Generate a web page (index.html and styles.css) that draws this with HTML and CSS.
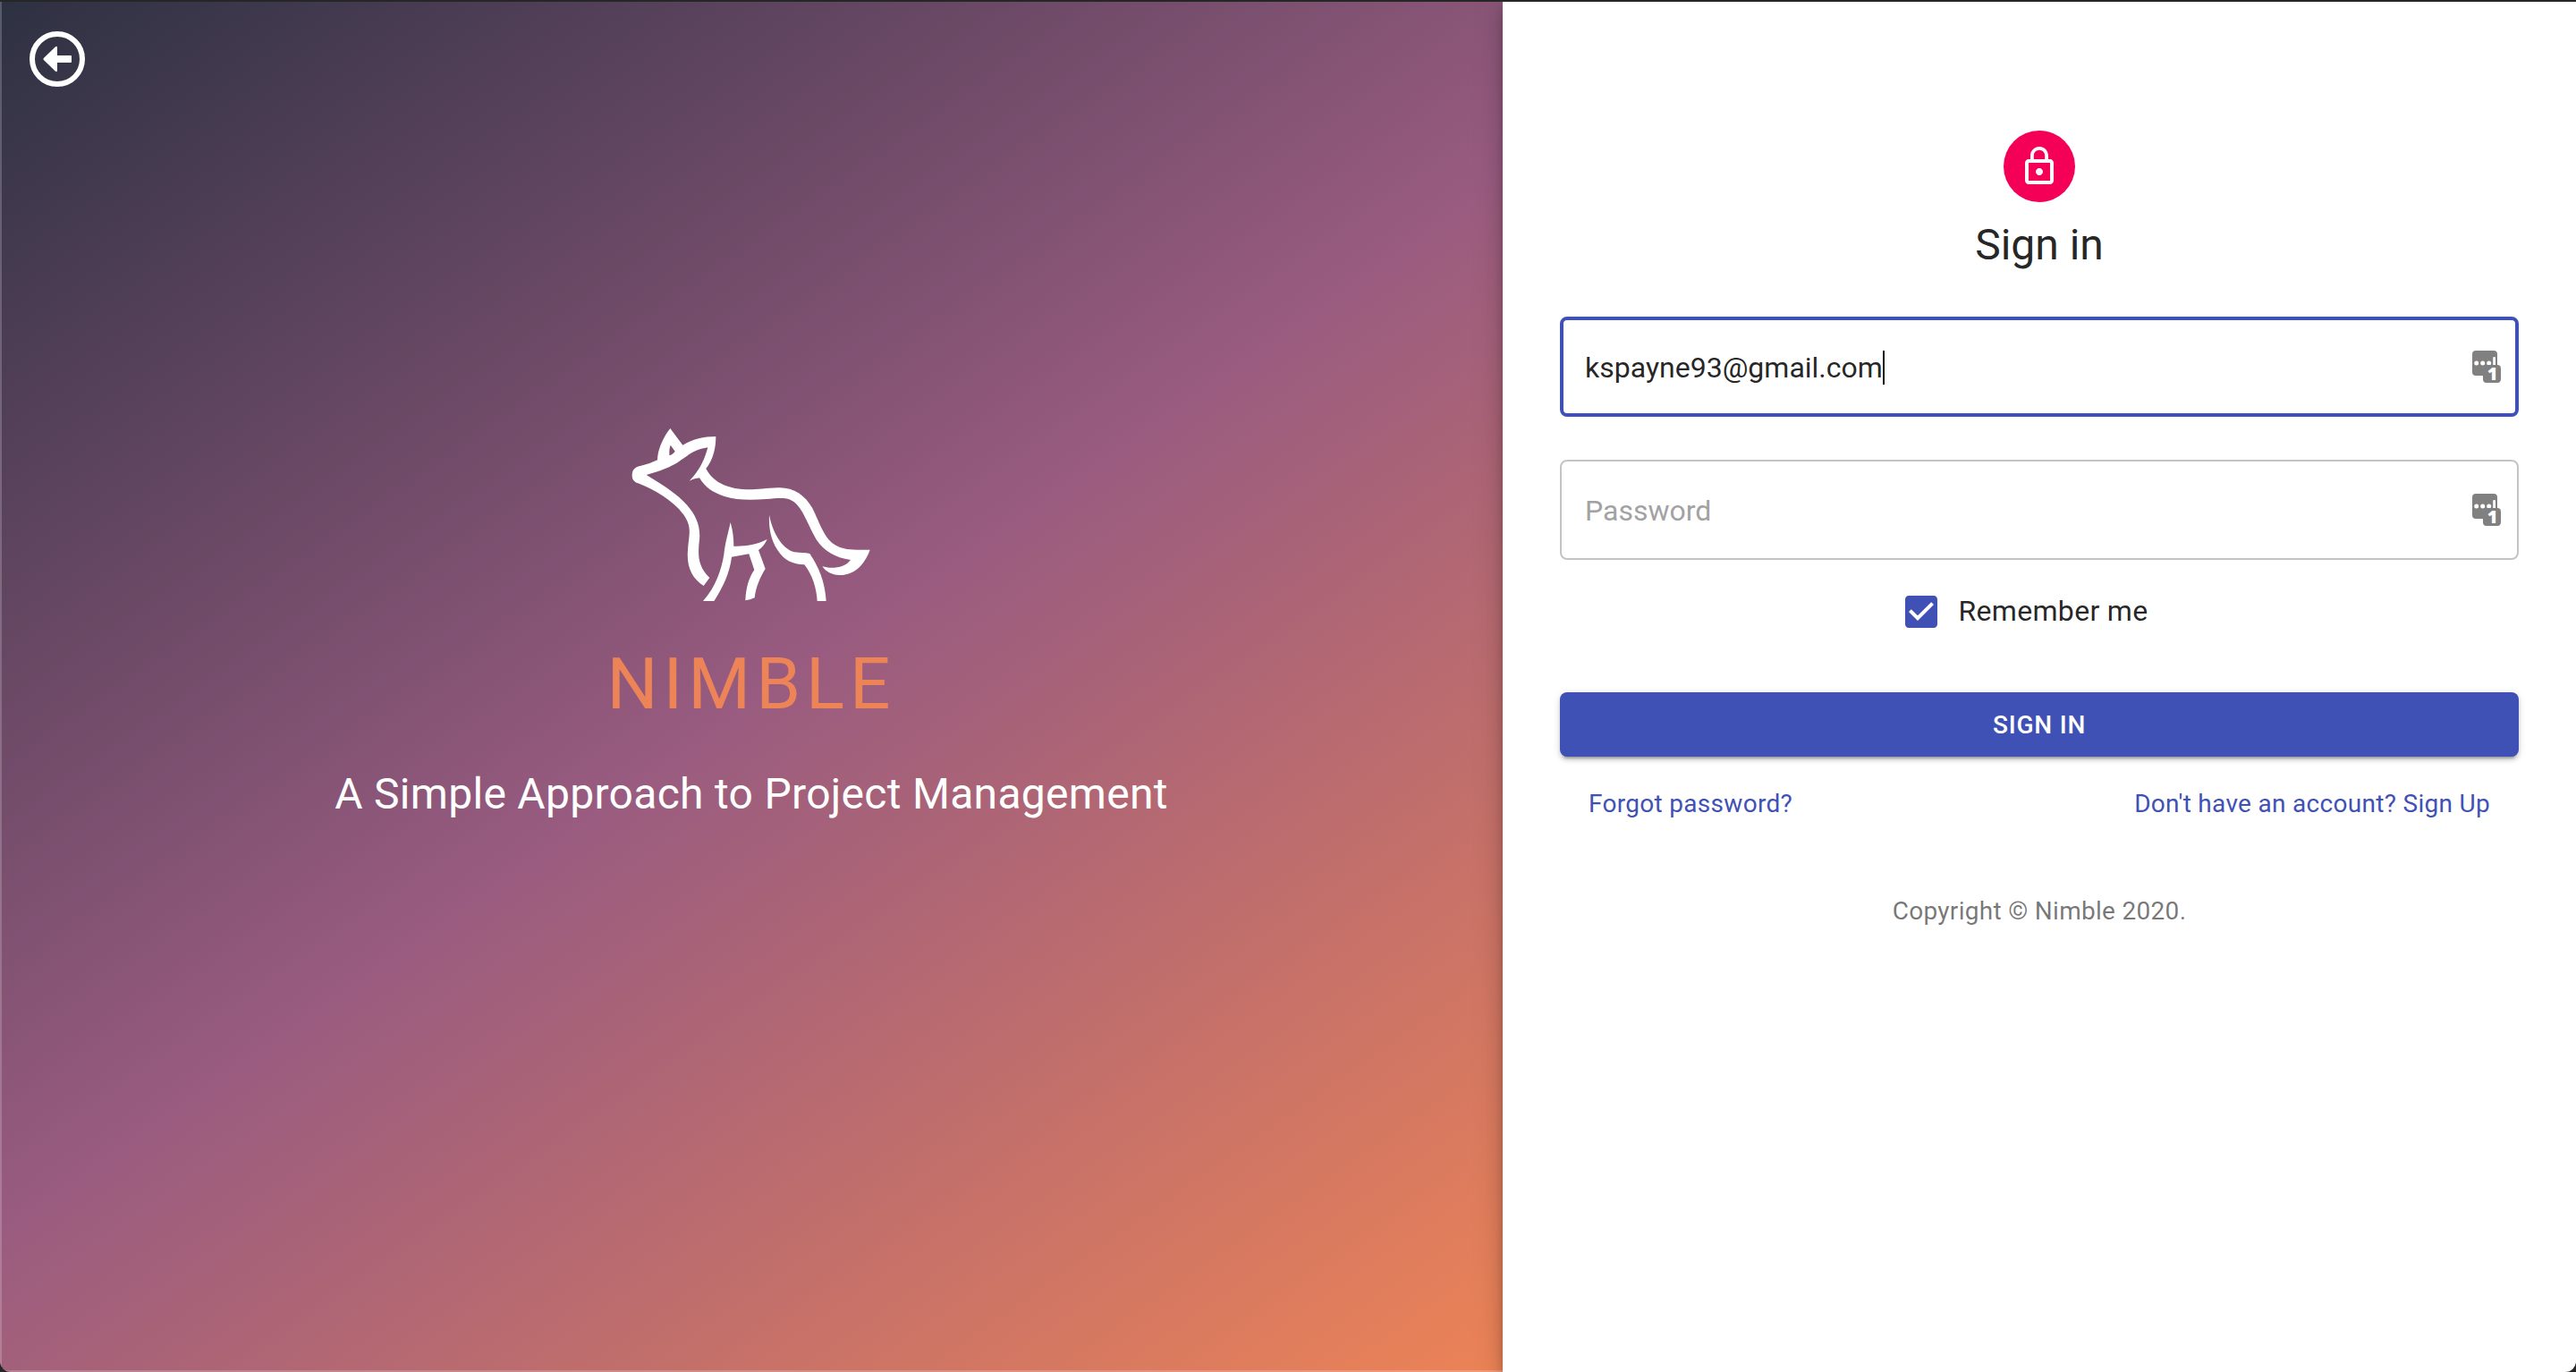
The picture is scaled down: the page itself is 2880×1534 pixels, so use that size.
FILE: index.html
```html
<!DOCTYPE html>
<html lang="en">
<head>
<meta charset="utf-8">
<title>Nimble</title>
<link rel="stylesheet" href="styles.css">
</head>
<body>
<div class="window">
  <section class="hero">
    <a class="back" href="#" aria-label="Back">
      <svg viewBox="0 0 62 62" width="62" height="62"><circle cx="31" cy="31" r="28" fill="none" stroke="#fff" stroke-width="6"/><path fill="#fff" d="M15.8 30 29 17.300Q31 16 31 18.500V27H46Q47 27 47 28V34Q47 35 46 35H31V43.500Q31 46 29 44.700L15.800 32Q15 31 15.800 30Z"/></svg>
    </a>
    <svg class="fox" viewBox="0 0 900 690" fill="#fff">
      <path fill-rule="evenodd" d="M50 215C50 195 60 185 80 182Q110 176 135 163C135 130 155 85 178 57L220 113C255 92 290 84 331 84C331 125 322 160 298 192C315 225 350 255 420 261C460 264 490 258 540 256C590 254 630 280 655 325C680 375 695 430 735 450C765 466 790 464 848 464C835 500 805 550 745 549C720 548 700 538 688 519C715 530 765 525 783 498C730 490 695 470 668 430C640 380 630 345 605 315C580 285 550 290 500 294C450 298 400 298 360 285C320 272 295 255 276 223C265 224 255 227 242 233C265 210 290 175 304 121C255 128 235 150 200 173C165 193 130 203 98 213C150 245 200 275 235 315C265 350 280 385 276 430C270 480 270 520 310 558L290 585C250 560 232 520 237 465C240 420 248 400 236 370C210 310 130 265 70 241C55 235 50 227 50 215ZM179 113L194 134C188 142 182 146 175 147C175 133 175 122 179 113Z"/>
      <path d="M380 372C388 400 391 425 391 452C430 453 465 448 503 429C496 445 486 457 474 465L497 528C480 555 465 590 461 625Q446 632 430 634C432 595 440 560 460 532L442 478L384 488C378 540 355 590 325 636L288 636C330 590 350 530 358 480C362 440 372 410 380 372Z"/>
      <path d="M510 347C520 400 550 460 595 472C615 475 630 473 646 477C675 520 697 570 701 636L671 636C668 590 655 550 628 514C590 513 560 500 538 465C515 430 508 390 510 347Z"/>
    </svg>
    <h1 class="brand">NIMBLE</h1>
    <p class="tagline">A Simple Approach to Project Management</p>
  </section>
  <main class="panel">
    <div class="avatar">
      <svg viewBox="0 0 24 24" width="48" height="48" fill="#fafafa"><path d="M12 17c1.100 0 2-.9 2-2s-.9-2-2-2-2 .9-2 2 .9 2 2 2zm6-9h-1V6c0-2.760-2.240-5-5-5S7 3.240 7 6v2H6c-1.100 0-2 .9-2 2v10c0 1.100.9 2 2 2h12c1.100 0 2-.9 2-2V10c0-1.100-.9-2-2-2zM8.900 6c0-1.710 1.390-3.100 3.100-3.100s3.100 1.390 3.100 3.100v2H8.900V6zM18 20H6V10h12v10z"/></svg>
    </div>
    <h2 class="title">Sign in</h2>
    <form class="form">
      <div class="field focused">
        <span class="value">kspayne93@gmail.com</span><span class="caret"></span>
        <svg class="manager" viewBox="0 0 32 36" width="32" height="36"><rect width="28" height="28" rx="4" fill="#808080"/><g fill="#fff"><circle cx="4.700" cy="14" r="2.500"/><circle cx="11.700" cy="14" r="2.500"/><circle cx="18.700" cy="14" r="2.500"/><rect x="23.200" y="7" width="2.800" height="10" rx="1"/></g><rect x="12" y="16" width="20" height="20" rx="4" fill="#808080"/><text class="count" x="22.500" y="33" text-anchor="middle">1</text></svg>
      </div>
      <div class="field">
        <span class="placeholder">Password</span>
        <svg class="manager" viewBox="0 0 32 36" width="32" height="36"><rect width="28" height="28" rx="4" fill="#808080"/><g fill="#fff"><circle cx="4.700" cy="14" r="2.500"/><circle cx="11.700" cy="14" r="2.500"/><circle cx="18.700" cy="14" r="2.500"/><rect x="23.200" y="7" width="2.800" height="10" rx="1"/></g><rect x="12" y="16" width="20" height="20" rx="4" fill="#808080"/><text class="count" x="22.500" y="33" text-anchor="middle">1</text></svg>
      </div>
      <div class="remember">
        <svg viewBox="0 0 24 24" width="48" height="48" fill="#3f51b5"><path d="M19 3H5c-1.110 0-2 .9-2 2v14c0 1.100.89 2 2 2h14c1.110 0 2-.9 2-2V5c0-1.100-.89-2-2-2zm-9 14l-5-5 1.410-1.410L10 14.170l7.590-7.590L19 8l-9 9z"/></svg>
        <span>Remember me</span>
      </div>
      <button class="submit" type="button">SIGN IN</button>
      <div class="links"><a href="#">Forgot password?</a><a href="#">Don't have an account? Sign Up</a></div>
    </form>
    <p class="copyright">Copyright © Nimble 2020.</p>
  </main>
</div>
</body>
</html>
```
FILE: styles.css
```css
* { box-sizing: border-box; }
html { background: #262626; }
body { margin: 0; padding-top: 2px; height: 1534px; font-family: Roboto, sans-serif; background: #262626; overflow: hidden; }
h1, h2, p { margin: 0; font-weight: 400; }
a { color: inherit; text-decoration: none; }
svg { display: block; flex: none; overflow: visible; }

.window { display: grid; grid-template-columns: 7fr 5fr; height: 1532px; border-radius: 0 0 12px 12px; overflow: hidden; }

.hero {
  position: relative;
  display: flex;
  flex-direction: column;
  align-items: center;
  padding-top: 458px;
  color: #fff;
  background: linear-gradient(145deg, #2d3142 0%, #985b80 50%, #ec8356 100%);
  box-shadow: inset 2px -2px rgba(255, 255, 255, .2);
}
.back { position: absolute; left: 33px; top: 33px; }
.fox { width: 300px; height: 230px; }
.brand { margin-top: 27px; font-size: 80px; line-height: 96px; letter-spacing: 6px; color: #ec8458; }
.tagline { margin-top: 43px; font-size: 48px; line-height: 64px; letter-spacing: .3px; }

.panel {
  position: relative;
  display: flex;
  flex-direction: column;
  align-items: center;
  padding: 144px 64px 0;
  background: #fff;
  color: rgba(0, 0, 0, .87);
  box-shadow: 0 6px 10px -2px rgba(0, 0, 0, .2), 0 12px 20px rgba(0, 0, 0, .14), 0 2px 36px rgba(0, 0, 0, .12);
}
.avatar { display: flex; align-items: center; justify-content: center; width: 80px; height: 80px; border-radius: 50%; background: #f50057; }
.title { margin-top: 16px; font-size: 48px; line-height: 64px; }

.form { display: flex; flex-direction: column; width: 100%; margin-top: 48px; }
.field { display: flex; align-items: center; height: 112px; margin-bottom: 48px; padding: 2px 18px 0 26px; border: 2px solid #c4c4c4; border-radius: 8px; font-size: 32px; line-height: 38px; }
.field.focused { padding: 2px 16px 0 24px; border: 4px solid #3f51b5; }
.field + .remember { margin-top: -14px; }
.placeholder { color: #a2a2a2; }
.caret { width: 2px; height: 38px; background: #111; }
.manager { margin: -2px 0 0 auto; }
.count { font: 800 20px "Open Sans", sans-serif; fill: #fff; }
.remember { display: flex; align-items: center; justify-content: center; gap: 18px; height: 48px; padding-right: 35px; font-size: 32px; line-height: 46px; letter-spacing: .3px; }
.remember span { padding-bottom: 2px; }
.submit { height: 72px; margin-top: 66px; padding: 0; border: 0; border-radius: 8px; background: #3f51b5; color: #fff; font: 500 28px/49px Roboto, sans-serif; letter-spacing: .8px; box-shadow: 0 6px 2px -4px rgba(0, 0, 0, .2), 0 4px 4px rgba(0, 0, 0, .14), 0 2px 10px rgba(0, 0, 0, .12); }
.links { display: flex; justify-content: space-between; margin-top: 33px; padding: 0 32px; color: #3f51b5; font-size: 28px; line-height: 40px; letter-spacing: .3px; }
.copyright { margin-top: 80px; color: rgba(0, 0, 0, .54); font-size: 28px; line-height: 40px; letter-spacing: .3px; }
```
